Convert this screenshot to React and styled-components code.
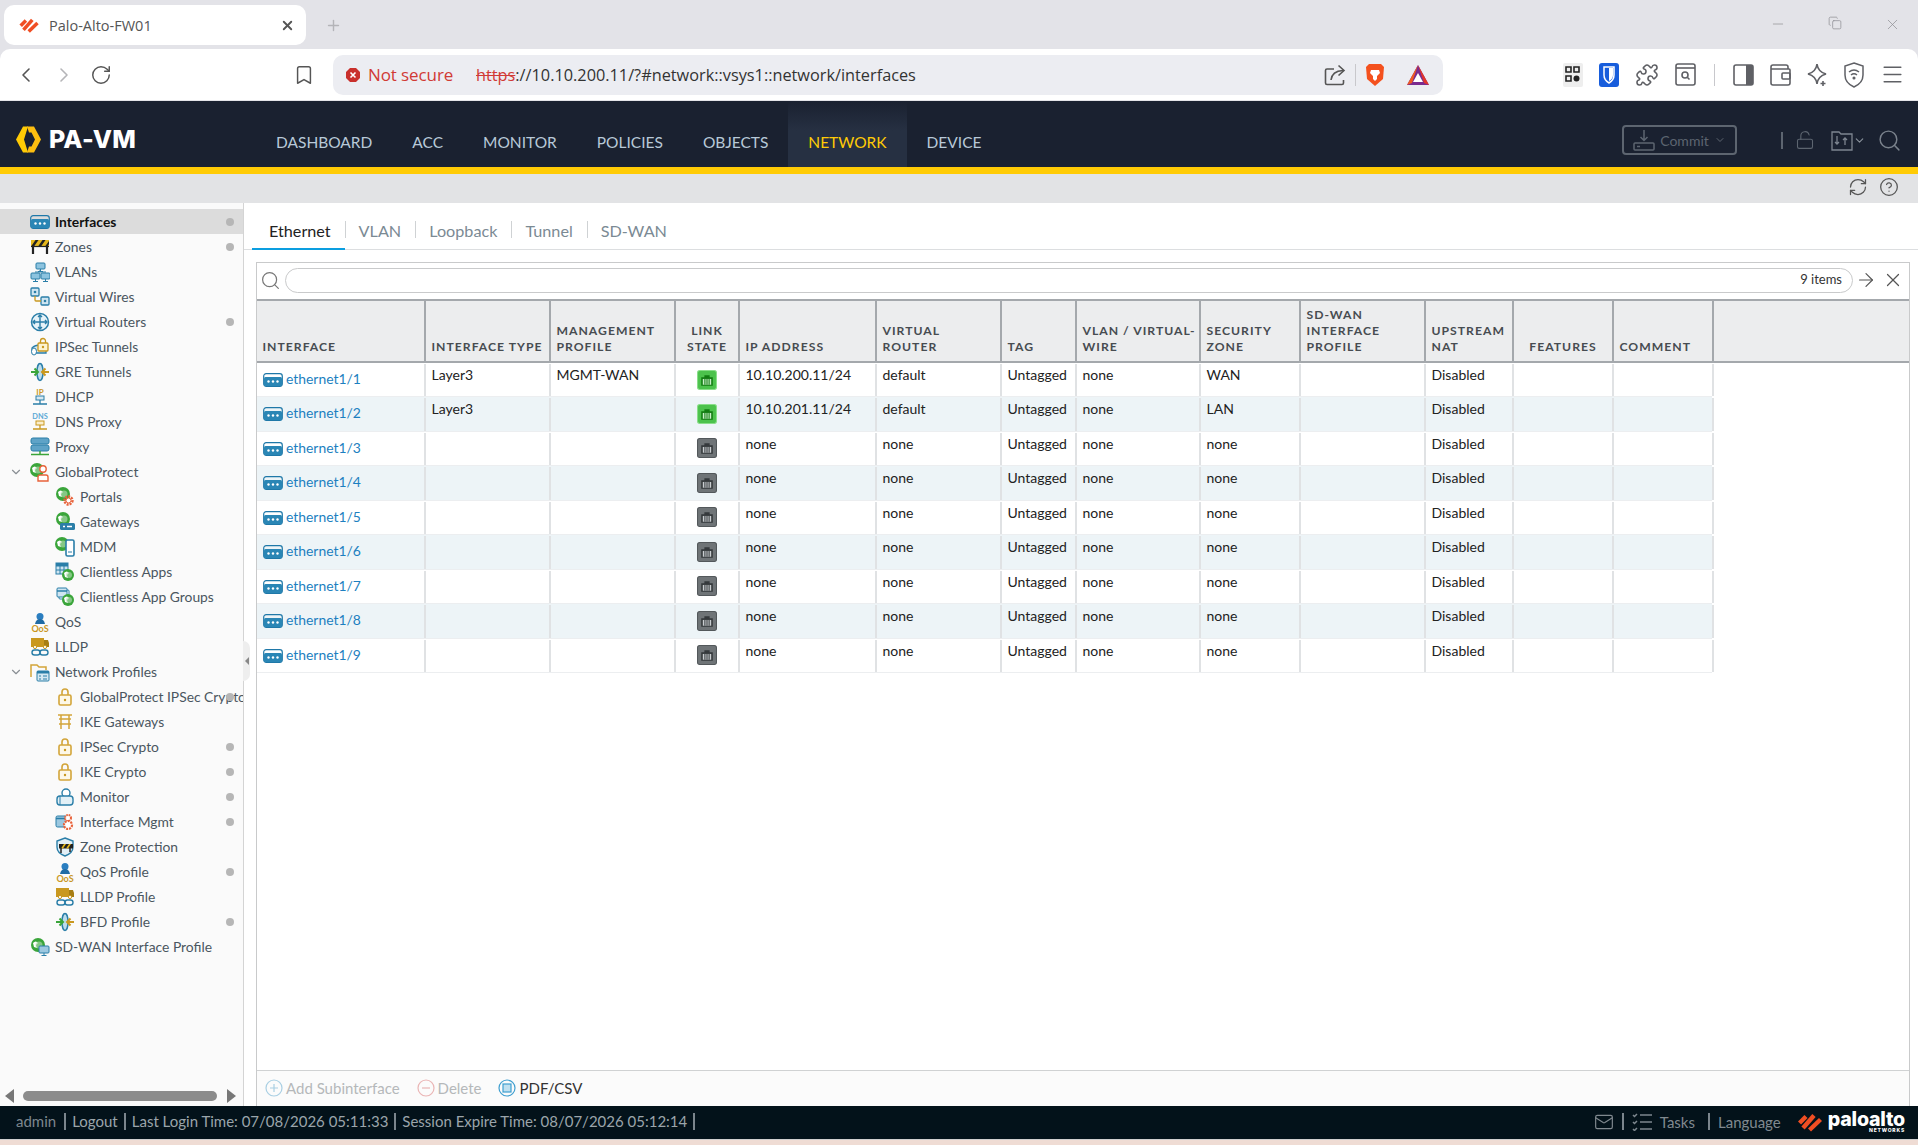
import React from 'react';
import styled, { createGlobalStyle } from 'styled-components';
import { ChevronLeft, ChevronRight, RotateCw, Bookmark, Puzzle, Search, X, Plus, Minus, ChevronDown, ArrowRight, RefreshCw, CircleHelp, Copy, Menu, LockOpen, Mail } from 'lucide-react';

const Global = createGlobalStyle`
  html, body { margin: 0; padding: 0; background: #e3e3e8; }
  body { font-family: "Lato", "Liberation Sans", sans-serif; overflow: hidden; }
  * { box-sizing: border-box; }
`;

const Page = styled.div`display:flex;flex-direction:column;width:1918px;height:1145px;overflow:hidden;`;

/* Browser chrome */
const TabStrip = styled.div`height:49px;background:#e3e3e8;display:flex;align-items:flex-start;padding:5px 0 0 4px;flex:none;`;
const BrowserTab = styled.div`width:302px;height:40px;background:#fff;border-radius:10px;display:flex;align-items:center;padding:0 11px 0 15px;color:#555;font:14.5px "Open Sans",sans-serif;`;
const TabTitle = styled.span`margin-left:9px;flex:1;`;
const NewTab = styled.div`margin:12px 0 0 19px;color:#b4b4b8;display:flex;`;
const WinButtons = styled.div`margin-left:auto;display:flex;gap:42px;padding:11px 17px 0 0;color:#8b8b90;`;
const Toolbar = styled.div`height:52px;background:#fff;border-radius:10px 10px 0 0;display:flex;align-items:center;flex:none;padding:0 0 0 14px;border-bottom:1px solid #e4e4e8;`;
const NavIcons = styled.div`display:flex;align-items:center;gap:14px;width:319px;color:#555;`;
const Dim = styled.span`display:flex;color:#b5b5b8;`;
const BookmarkSlot = styled.span`display:flex;margin-left:auto;margin-right:18px;`;
const Address = styled.div`width:1110px;height:40px;background:#ecedf2;border-radius:10px;display:flex;align-items:center;padding:0 13px 0 12px;font:17px "Open Sans",sans-serif;color:#333;`;
const Insecure = styled.span`color:#d13a35;margin-left:7px;width:108px;letter-spacing:-.1px;`;
const Url = styled.span`font-size:16.3px;`;
const Strike = styled.span`color:#d13a35;text-decoration:line-through;`;
const AddrRight = styled.div`margin-left:auto;display:flex;align-items:center;color:#555;`;
const VSep = styled.span`width:1px;height:22px;background:${p => p.$clear ? 'transparent' : '#c8c8cc'};margin:0 ${p => p.$m || 12}px;`;
const ExtIcons = styled.div`display:flex;align-items:center;gap:16px;margin-left:120px;color:#5f6065;`;

/* App header */
const Header = styled.header`height:73px;flex:none;background:#1a2130;border-bottom:7px solid #ffcb05;display:flex;`;
const Logo = styled.div`width:256px;display:flex;align-items:center;padding:10px 0 0 16px;gap:8px;color:#fff;font:800 25px "Inter",sans-serif;letter-spacing:.2px;`;
const Nav = styled.nav`display:flex;`;
const NavItem = styled.div`padding:15px 20px 0;display:flex;align-items:center;font-size:15.5px;color:${p => p.$active ? '#ffcb05' : '#b8c9d8'};background:${p => p.$active ? 'linear-gradient(#1a2130,#263042 45%)' : 'none'};`;
const HeadRight = styled.div`margin-left:auto;display:flex;align-items:center;color:#5d6570;padding:12px 16px 0 0;`;
const CommitBtn = styled.div`width:115px;height:30px;border:2px solid #5d6570;border-radius:4px;display:flex;align-items:center;justify-content:center;gap:5px;font-size:14px;color:#5d6570;margin-right:44px;`;
const HeadSep = styled.span`width:2px;height:17px;background:#5d6570;margin-right:12px;`;
const HeadGap = styled.span`width:${p => p.$w}px;`;

const SubBar = styled.div`height:29px;flex:none;background:#e2e3e5;display:flex;align-items:center;justify-content:flex-end;gap:11px;padding:0 19px 3px 0;color:#555;`;

const Body = styled.div`height:903px;flex:none;display:flex;background:#fff;`;

/* Sidebar */
const Sidebar = styled.aside`width:244px;flex:none;background:#fafafa;border-right:1px solid #d4d4d4;position:relative;display:flex;flex-direction:column;padding-top:6px;`;
const Tree = styled.div`flex:1;overflow:hidden;`;
const TreeRow = styled.div`height:25px;display:flex;align-items:center;position:relative;padding-left:${p => p.$level ? 55 : 30}px;background:${p => p.$active ? '#dcdcdc' : 'transparent'};font-size:13.85px;font-weight:${p => p.$active ? 700 : 400};color:${p => p.$active ? '#111' : '#4a5660'};white-space:nowrap;overflow:hidden;`;
const Chevron = styled.span`position:absolute;left:9px;top:6px;display:flex;color:#8a8f94;`;
const IconSlot = styled.span`width:22px;height:22px;flex:none;margin-right:4px;display:flex;align-items:center;justify-content:center;margin-left:-1px;`;
const Dot = styled.span`position:absolute;right:9px;top:9px;width:8px;height:8px;border-radius:50%;background:#b6b6b6;`;
const Handle = styled.span`position:absolute;right:-7px;top:438px;width:7px;height:40px;background:#eee;border-radius:0 8px 8px 0;display:flex;align-items:center;justify-content:center;
  &::before{content:"";border:4px solid transparent;border-right:4px solid #888;border-left:none;}`;
const HScroll = styled.div`height:16px;flex:none;margin-bottom:2px;display:flex;align-items:center;padding:0 5px;`;
const ScrollThumb = styled.div`width:194px;height:10px;border-radius:5px;background:#8c8c8c;margin:0 10px 0 9px;`;
const Arrow = styled.span`width:0;height:0;border:7px solid transparent;${p => p.$dir === 'l' ? 'border-right:9px solid #777;border-left:none;' : 'border-left:9px solid #777;border-right:none;'}`;

/* Main */
const Main = styled.main`flex:1;min-width:0;display:flex;flex-direction:column;padding:0 8px 0 12px;`;
const Tabs = styled.div`height:47px;flex:none;margin:0 -8px 12px -12px;padding-left:8px;border-bottom:1px solid #dcdee0;display:flex;align-items:center;`;
const Tab = styled.div`height:47px;display:flex;align-items:center;padding:${p => p.$active ? 9 : 7}px 14px 0 ${p => p.$active ? 17 : 13}px;font-size:16.2px;color:${p => p.$active ? '#222' : '#7b8a94'};position:relative;border-bottom:${p => p.$active ? '2px solid #0c9ee0' : 'none'};margin-bottom:-1px;`;
const TabSep = styled.span`width:1px;height:17px;background:#cfd2d4;margin-top:7px;`;
const Panel = styled.section`flex:1;min-height:0;display:flex;flex-direction:column;border:1px solid #c9cacb;border-bottom:none;`;
const SearchBar = styled.div`height:36px;flex:none;display:flex;align-items:center;padding:0 5px 2px 3px;color:#777;`;
const SearchInput = styled.div`width:1570px;height:25px;margin-left:4px;border:1px solid #c9cacb;border-radius:13px;display:flex;align-items:center;justify-content:flex-end;padding:0 10px 2px 0;font-size:13px;color:#333;`;
const SearchTools = styled.div`display:flex;gap:5px;margin-left:2px;color:#555;`;
const HeaderRow = styled.div`display:flex;height:64px;flex:none;background:#ecedee;border-top:2px solid #a4a8ac;border-bottom:2px solid #a4a8ac;`;
const Th = styled.div`flex:none;width:${p => p.$w}px;border-right:2px solid #a4a8ac;padding:0 5.5px 6px;display:flex;align-items:flex-end;justify-content:${p => p.$center ? 'center' : 'flex-start'};text-align:${p => p.$center ? 'center' : 'left'};font-size:12.2px;font-weight:700;letter-spacing:1px;line-height:16px;color:#474c51;white-space:nowrap;`;
const Rows = styled.div`flex:1;min-height:0;`;
const Row = styled.div`display:flex;height:34.45px;width:1455px;background:${p => p.$alt ? '#edf4f7' : '#fff'};border-bottom:1px solid #eceef0;`;
const Td = styled.div`flex:none;width:${p => p.$w}px;border-right:2px solid #e0e2e4;margin-top:1px;padding:2px 5.5px 0;font-size:14px;line-height:18px;color:#222;white-space:nowrap;`;
const LinkCell = styled(Td)`display:flex;align-items:flex-start;padding:6px 0 0 6px;color:#1c7fc0;gap:3px;font-size:13.9px;`;
const PortWrap = styled.span`display:flex;margin-top:3px;`;
const StateCell = styled(Td)`display:flex;justify-content:center;padding:5.5px 0 0;`;
const Footer = styled.div`height:36px;flex:none;background:#fbfbfb;border-top:1px solid #d0d2d3;display:flex;align-items:center;padding:0 0 2px 8px;font-size:15px;`;
const FootBtn = styled.div`display:flex;align-items:center;gap:3px;margin-right:17px;color:${p => p.$on ? '#333' : '#b5b8ba'};`;

/* Status */
const Status = styled.footer`height:33px;flex:none;background:#03121a;color:#9ba5ab;display:flex;align-items:center;padding:0 13px 2px 16px;font-size:15px;`;
const StatusItem = styled.span`padding:0 6px;border-right:2px solid #7b858c;line-height:17px;&:first-child{padding-left:0;color:#7d878e;padding-right:8px;}`;
const StatusRight = styled.div`margin-left:auto;display:flex;align-items:center;color:#80898f;gap:8px;`;
const Bar = styled.span`width:2px;height:17px;background:#7b858c;margin-left:${p => p.$ml || 0}px;`;
const LangLabel = styled.span`margin-right:9px;`;
const PaloWord = styled.div`display:flex;flex-direction:column;align-items:flex-end;color:#fff;font:800 19.6px/15px "Inter",sans-serif;letter-spacing:-.2px;margin-left:-3px;padding-top:2px;`;
const Networks = styled.span`font-size:5px;line-height:6px;letter-spacing:.8px;`;
const Strip = styled.div`height:6px;flex:none;background:#efdcd4;border-top:1px solid #cfcfcf;`;

/* Icons */
const B = '#2a7ea8', G = '#c9981f', GR = '#3aa53a', O = '#e8623a';
const S = ({ children, w = 20, h = 20, vb = '0 0 20 20' }) => <svg width={w} height={h} viewBox={vb} fill="none">{children}</svg>;

const Port = ({ w = 20, h = 14 }) => <svg width={w} height={h} viewBox="0 0 20 14" fill="none"><rect x=".7" y=".7" width="18.600" height="12.600" rx="2.500" stroke="#1f78a8" strokeWidth="1.2"/><rect x="1" y="4" width="18" height="9" rx="1.500" fill="#2a86b5"/><circle cx="5.500" cy="8.500" r="1.200" fill="#fff"/><circle cx="10" cy="8.500" r="1.200" fill="#fff"/><circle cx="14.500" cy="8.500" r="1.200" fill="#fff"/></svg>;
const Barricade = () => <><rect x="1" y="3" width="18" height="6.500" fill="#e5b71b"/><path d="M1 9.500 5.500 3h3l-4.500 6.500zM8 9.500 12.500 3h3l-4.500 6.500zM15 9.500 19 4v3l-1.500 2.500z" fill="#222"/><path d="M1 9.500h18" stroke="#222" strokeWidth="1.200"/><path d="M3 9v8M17 9v8" stroke="#222" strokeWidth="2.200"/></>;
const Globe = ({ x = 8, y = 8, r = 7 }) => <g><circle cx={x} cy={y} r={r} fill="#3aa53a"/><path d={`M${x - r + 2} ${y - 2}q3-3 5 0l-2 2 1 3-3-1z`} fill="#fff"/><circle cx={x + 1} cy={y} r={r * .5} fill="#b8e0b8" opacity=".6"/></g>;
const Monitor = ({ x, y }) => <g><rect x={x} y={y} width="9" height="6" rx="1" fill="#8cc3df" stroke={B}/><path d={`M${x + 4.5} ${y + 6}v2M${x + 2} ${y + 8.5}h5`} stroke={B}/></g>;
const LockIco = () => <><rect x="4" y="8" width="12" height="10" rx="1.5" stroke="#d3a53a" strokeWidth="1.6" fill="#fdf8e8"/><path d="M7 8V5a3 3 0 016 0v3" stroke="#d3a53a" strokeWidth="1.6"/><circle cx="10" cy="13" r="1.2" fill={G}/></>;
const QosIco = () => <><circle cx="10" cy="4.500" r="3.500" fill="#2a7ec0"/><path d="M5 12q1-5 5-5t5 5z" fill="#1f6ba5"/><text x="10" y="19.500" textAnchor="middle" fontSize="9" fontWeight="700" fill={G} fontFamily="Lato">QoS</text></>;
const TruckIco = () => <><rect x="1" y="1" width="13" height="9" fill={G}/><path d="M14 3h4l1 3v4h-5z" fill="#a77e14"/><circle cx="5" cy="10" r="1.6" fill="#fff" stroke={G}/><circle cx="15" cy="10" r="1.6" fill="#fff" stroke={G}/><rect x="2" y="13" width="8" height="5" rx="2.5" stroke={B} strokeWidth="1.4"/><rect x="10" y="13" width="8" height="5" rx="2.5" stroke={B} strokeWidth="1.4"/></>;
const Tunnel = () => <><ellipse cx="10" cy="10" rx="3" ry="8.500" fill="#bcdcec" stroke={B} strokeWidth="1.4"/><path d="M1 10h6M4.500 6.500 8 10l-3.500 3.500" stroke={GR} strokeWidth="2"/><path d="M19 10h-6M15.500 6.500 12 10l3.500 3.500" stroke={G} strokeWidth="2"/></>;

const icons = {
  iface: <Port />,
  zones: <S><Barricade /></S>,
  vlans: <S><Monitor x={6} y={1} /><Monitor x={1} y={11} /><Monitor x={11} y={11} /><path d="M10 8v2M5 10h11" stroke={B} /></S>,
  wires: <S><rect x="1" y="1" width="8" height="8" rx="1" fill="#cfe5f1" stroke={B} strokeWidth="1.3" /><rect x="11" y="10" width="8" height="8" rx="1" fill="#cfe5f1" stroke={B} strokeWidth="1.3" /><circle cx="5" cy="5" r="1.3" fill={B} /><circle cx="15" cy="14" r="1.3" fill={B} /><path d="M5 9v4q0 1 1 1h5" stroke={G} strokeWidth="1.3" /></S>,
  router: <S><circle cx="10" cy="10" r="8.500" fill="#e6f2f8" stroke={B} strokeWidth="1.5" /><path d="M10 3v14M3 10h14M8 5l2-2 2 2M8 15l2 2 2-2M5 8l-2 2 2 2M15 8l2 2-2 2" stroke={B} strokeWidth="1.4" /></S>,
  ipsec: <S><path d="M2 11q3-3 8-3h6v8H5a3 3 0 01-3-3z" fill="#d5e8f2" stroke={B} strokeWidth="1.3" /><ellipse cx="4" cy="14.500" rx="2.500" ry="3.500" fill="#fff" stroke={B} /><rect x="8" y="6" width="10" height="8" rx="1" fill="#fdf3d0" stroke={G} strokeWidth="1.3" /><path d="M10.500 6V4a2.500 2.500 0 015 0v2" stroke={G} strokeWidth="1.3" /><circle cx="13" cy="10" r="1.2" fill={G} /></S>,
  gre: <S><Tunnel /></S>,
  dhcp: <S><text x="10" y="7.500" textAnchor="middle" fontSize="8" fontWeight="700" fill={G} fontFamily="Lato">IP</text><rect x="6" y="9" width="8" height="4" fill="#d6e8f2" stroke={B} /><path d="M10 13v4M3 17h14" stroke={B} strokeWidth="1.3" /></S>,
  dns: <S><text x="10" y="7" textAnchor="middle" fontSize="7.400" fontWeight="700" fill="#5aa9d6" fontFamily="Lato">DNS</text><rect x="6" y="9" width="8" height="4" fill="#fbeecb" stroke={G} /><path d="M10 13v4M3 17h14" stroke={G} strokeWidth="1.3" /></S>,
  proxy: <S><rect x="1" y="1" width="18" height="6" rx="2" fill="#5fa3c7" stroke={B} /><rect x="1" y="8" width="18" height="6" rx="2" fill="#5fa3c7" stroke={B} /><path d="M10 14v3M1 17.500h18" stroke={GR} strokeWidth="1.5" /></S>,
  gp: <S><Globe x={7} y={8} /><circle cx="13" cy="7" r="3.200" fill="#fff" stroke={O} strokeWidth="1.4" /><path d="M8 19v-4q0-2 2-2h6q2 0 2 2v4z" fill="#fff" stroke={O} strokeWidth="1.4" /></S>,
  portal: <S><Globe x={8} y={7} /><circle cx="13.500" cy="13.500" r="4" fill="none" stroke={O} strokeWidth="2.400" strokeDasharray="2 1" /><circle cx="13.500" cy="13.500" r="2.500" fill="#fff" stroke={O} /></S>,
  gateway: <S><Globe x={8} y={7} /><rect x="5" y="11" width="15" height="7" rx="1.5" fill={B} /><path d="M8 14.500h2M12 14.500h5" stroke="#fff" strokeWidth="1.4" /></S>,
  mdm: <S><Globe x={7} y={7} /><rect x="11" y="3" width="8" height="16" rx="1.5" fill="#fff" stroke={B} strokeWidth="1.6" /><path d="M13 15h4" stroke={B} /></S>,
  apps: <S><rect x="1" y="1" width="12" height="11" fill="#cfe5f1" stroke={B} /><path d="M1 4h12M1 8h12M5 4v8M9 4v8" stroke={B} /><rect x="1" y="1" width="12" height="3" fill={B} /><Globe x={13} y={13} r={6} /></S>,
  appgrp: <S><rect x="4" y="3" width="10" height="9" rx="1" fill="#fff" stroke={B} /><rect x="2" y="1" width="10" height="9" rx="1" fill="#cfe5f1" stroke={B} /><path d="M2 4h10" stroke={B} strokeWidth="1.5" /><Globe x={13} y={13} r={6} /></S>,
  qos: <S><QosIco /></S>,
  lldp: <S><TruckIco /></S>,
  netprof: <S><path d="M1 15V3h6l2 2h7v3" stroke="#d3a53a" strokeWidth="1.5" /><rect x="7" y="9" width="12" height="10" rx="1" fill="#d5e8f2" stroke={B} /><rect x="7" y="9" width="12" height="2.500" fill={B} /><path d="M9 14h2M13 14h4M9 17h2M13 17h4" stroke={B} /></S>,
  lock: <S><LockIco /></S>,
  torii: <S><path d="M3 3h14M4 7h12M6 3v14M14 3v14M4 12h12" stroke="#d3a53a" strokeWidth="1.5" /></S>,
  mon: <S><circle cx="11" cy="6" r="4" fill="#fff" stroke={B} strokeWidth="1.4" /><rect x="2" y="9" width="16" height="9" rx="3" fill="#e3f0f6" stroke={B} strokeWidth="1.4" /><path d="M5 9v9" stroke={B} /></S>,
  mgmt: <S><rect x="1" y="4" width="13" height="11" rx="1.5" fill="#9cc8e0" stroke={B} /><path d="M1 6.500h13" stroke={B} strokeWidth="1.5" /><circle cx="13" cy="6" r="3" stroke={O} strokeWidth="2" strokeDasharray="1.6 .8" fill="#fff" /><circle cx="13" cy="13" r="4" stroke={O} strokeWidth="2.200" strokeDasharray="2 1" fill="#fff" /></S>,
  zprot: <S><path d="M10 1l8 3v6q0 6-8 9-8-3-8-9V4z" fill="#e2eff6" stroke={B} strokeWidth="1.4" /><path d="M4 7h14v4.500H4z" fill="#222" /><path d="M6 11.500 9 7h2l-3 4.500zM11 11.500 14 7h2l-3 4.500z" fill="#e5b71b" /><path d="M6 11v5M15 11v4" stroke="#222" strokeWidth="1.5" /></S>,
  sdwan: <S><Globe x={8} y={8} /><rect x="9" y="9" width="10" height="7" rx="1" fill="#9cc8e0" stroke={B} /><path d="M14 16v2M11.500 18.500h5" stroke={B} /></S>,
};

const tree = [
  ['Interfaces', 'iface', { active: 1, dot: 1 }], ['Zones', 'zones', { dot: 1 }], ['VLANs', 'vlans'], ['Virtual Wires', 'wires'], ['Virtual Routers', 'router', { dot: 1 }],
  ['IPSec Tunnels', 'ipsec'], ['GRE Tunnels', 'gre'], ['DHCP', 'dhcp'], ['DNS Proxy', 'dns'], ['Proxy', 'proxy'], ['GlobalProtect', 'gp', { open: 1 }],
  ['Portals', 'portal', { level: 1 }], ['Gateways', 'gateway', { level: 1 }], ['MDM', 'mdm', { level: 1 }], ['Clientless Apps', 'apps', { level: 1 }], ['Clientless App Groups', 'appgrp', { level: 1 }],
  ['QoS', 'qos'], ['LLDP', 'lldp'], ['Network Profiles', 'netprof', { open: 1 }],
  ['GlobalProtect IPSec Crypto', 'lock', { level: 1, dot: 1 }], ['IKE Gateways', 'torii', { level: 1 }], ['IPSec Crypto', 'lock', { level: 1, dot: 1 }], ['IKE Crypto', 'lock', { level: 1, dot: 1 }],
  ['Monitor', 'mon', { level: 1, dot: 1 }], ['Interface Mgmt', 'mgmt', { level: 1, dot: 1 }], ['Zone Protection', 'zprot', { level: 1 }], ['QoS Profile', 'qos', { level: 1, dot: 1 }], ['LLDP Profile', 'lldp', { level: 1 }], ['BFD Profile', 'gre', { level: 1, dot: 1 }], ['SD-WAN Interface Profile', 'sdwan'],
];

const cols = [169, 125, 125, 64, 137, 125, 75, 124, 100, 125, 88, 100, 100];
const heads = ['INTERFACE', 'INTERFACE TYPE', <>MANAGEMENT<br />PROFILE</>, <>LINK<br />STATE</>, 'IP ADDRESS', <>VIRTUAL<br />ROUTER</>, 'TAG', <>VLAN / VIRTUAL-<br />WIRE</>, <>SECURITY<br />ZONE</>, <>SD-WAN<br />INTERFACE<br />PROFILE</>, <>UPSTREAM<br />NAT</>, 'FEATURES', 'COMMENT'];
const data = Array.from({ length: 9 }, (_, i) => ({
  name: `ethernet1/${i + 1}`,
  type: i < 2 ? 'Layer3' : '',
  mgmt: i === 0 ? 'MGMT-WAN' : '',
  up: i < 2,
  ip: i === 0 ? '10.10.200.11/24' : i === 1 ? '10.10.201.11/24' : 'none',
  vr: i < 2 ? 'default' : 'none',
  zone: i === 0 ? 'WAN' : i === 1 ? 'LAN' : 'none',
}));

const LinkState = ({ up }) => {
  const bg = up ? '#4cc24c' : '#6f7477', bd = up ? '#8ade8a' : '#53585b', ink = up ? '#127c12' : '#35393c', hole = up ? '#c9f0c9' : '#c9cdd0';
  return <svg width="20" height="20" viewBox="0 0 19 19"><rect x=".5" y=".5" width="18" height="18" rx="2" fill={bg} stroke={bd} /><path d="M4 7h3V5h5v2h3v8H4z" fill={ink} /><path d="M5.500 8.500h8V14h-8z" fill={hole} /><path d="M7.500 8.500V14M9.500 8.500V14M11.500 8.500V14" stroke={ink} /></svg>;
};

const PaloMark = ({ w = 25, h = 20 }) => <svg width={w} height={h} viewBox="0 0 25 20" fill="none" stroke="#f04e23" strokeWidth="4.400"><path d="M1.500 11 8 4.500" /><path d="M5 16 16 3.500" /><path d="M11.500 18 22.500 7.500" /></svg>;
const PALogo = () => <svg width="25" height="27" viewBox="0 0 25 26"><path d="M7 0h5L8 13l4 13H7L0 13z" fill="#ffcb05" /><path d="M11 0h7l7 13-7 13h-7l2-6h2.500l3.500-7-3.500-7H13z" fill="#fdbe10" /></svg>;

const ShareIco = () => <svg width="22" height="22" viewBox="0 0 22 22" fill="none" stroke="#555" strokeWidth="1.6"><path d="M10 5H3a1.500 1.500 0 00-1.500 1.500V19A1.500 1.500 0 003 20.500h15a1.500 1.500 0 001.500-1.500v-3" /><path d="M7 16q1-9 12-9.500" /><path d="M14.500 1.500 20 6.500l-5.500 5" /></svg>;
const Brave = () => <svg width="20" height="24" viewBox="0 0 20 24"><path d="M4 1h12l3 3-1 12-8 7-8-7L1 4z" fill="#f4511e" /><path d="M6 7h8l1 3-3 3v3l-2 2-2-2v-3L5 10z" fill="#fff" /></svg>;
const Bat = () => <svg width="24" height="22" viewBox="0 0 24 22"><path d="M12 1L1 21h22z" fill="#7b2b8f" /><path d="M12 1L1 21l5-2z" fill="#f15a22" /><path d="M12 1l11 20-5-2z" fill="#e2352b" /><path d="M12 9l-5 9h10z" fill="#fff" /></svg>;
const Bitwarden = () => <svg width="20" height="24" viewBox="0 0 20 24"><rect width="20" height="24" rx="3" fill="#175ddc" /><path d="M5 4h10v8q0 5-5 8-5-3-5-8z" stroke="#fff" strokeWidth="1.5" fill="none" /><path d="M10 5h4v7q0 4-4 6z" fill="#fff" /></svg>;
const Qr = () => <svg width="20" height="24" viewBox="0 0 20 24"><rect width="20" height="24" rx="2" fill="#eee" /><path d="M3 4h5v5H3zM11 4h5v5h-5zM3 13h5v5H3z" fill="none" stroke="#222" strokeWidth="1.6" /><circle cx="13.500" cy="15.500" r="3" fill="#222" /></svg>;
const WinSearch = () => <svg width="21" height="23" viewBox="0 0 21 23" fill="none" stroke="#5f6065" strokeWidth="1.6"><rect x="1" y="1" width="19" height="21" rx="2" /><path d="M1 5h19" /><circle cx="10" cy="12" r="3" /><path d="M12.500 14.500l2 2" /></svg>;
const Panelico = () => <svg width="21" height="22" viewBox="0 0 21 22"><rect x="1" y="1" width="19" height="20" rx="2" fill="#fff" stroke="#5f6065" strokeWidth="1.6" /><rect x="13" y="1" width="7" height="20" fill="#5f6065" /></svg>;
const Wallet = () => <svg width="21" height="22" viewBox="0 0 21 22" fill="none" stroke="#5f6065" strokeWidth="1.6"><path d="M18 5V3a2 2 0 00-2-2H3a2 2 0 00-2 2v16a2 2 0 002 2h15a2 2 0 002-2V6a1 1 0 00-1-1H1" /><rect x="12" y="9" width="8" height="6" rx="1" /></svg>;
const Spark = () => <svg width="21" height="24" viewBox="0 0 21 24" fill="none" stroke="#5f6065" strokeWidth="1.6"><path d="M10 1q1 8 9 10-8 2-9 10-1-8-9-10 8-2 9-10z" /><path d="M16 18v5M13.500 20.500h5" /></svg>;
const ShieldWifi = () => <svg width="20" height="26" viewBox="0 0 20 26" fill="none" stroke="#5f6065" strokeWidth="1.5"><path d="M10 1l9 3v9q0 8-9 12-9-4-9-12V4z" /><path d="M5 10q5-4 10 0M7 13q3-2.500 6 0" /><circle cx="10" cy="16" r=".8" /></svg>;
const FileTransfer = () => <svg width="22" height="22" viewBox="0 0 22 22" fill="none" stroke="#7d8590" strokeWidth="1.3"><path d="M1 3h7l2 2h11v16H1z" /><path d="M6 7v8M4 13l2 2 2-2M14 16V9M12 11l2-2 2 2" /></svg>;
const Download = () => <svg width="22" height="22" viewBox="0 0 22 22" fill="none" stroke="#5d6570" strokeWidth="1.5"><path d="M11 1v10M7.500 8l3.500 3.500L14.500 8" /><rect x="1" y="14" width="20" height="7" rx="1" /><path d="M4 17.500h3" /></svg>;
const CircleBtn = ({ c, children }) => <svg width="18" height="18" viewBox="0 0 18 18" fill="none" stroke={c} strokeWidth="1.2"><circle cx="9" cy="9" r="8" />{children}</svg>;
const Tasks = () => <svg width="20" height="18" viewBox="0 0 20 18" fill="none" stroke="#7d878e" strokeWidth="1.5"><path d="M8 2h12M8 9h12M8 16h12M1 2l1.500 1.500L5 1M1 9l1.500 1.500L5 8M1 16l1.500 1.500L5 15" /></svg>;

export default function App() {
  return (
    <Page>
      <Global />
      <TabStrip>
        <BrowserTab><PaloMark w={21} h={16} /><TabTitle>Palo-Alto-FW01</TabTitle><X size={15} strokeWidth={3} color="#555" /></BrowserTab>
        <NewTab><Plus size={17} /></NewTab>
        <WinButtons><Minus size={16} strokeWidth={1} /><Copy size={14} strokeWidth={1.2} /><X size={17} strokeWidth={1} /></WinButtons>
      </TabStrip>
      <Toolbar>
        <NavIcons>
          <ChevronLeft size={24} strokeWidth={1.6} />
          <Dim><ChevronRight size={24} strokeWidth={1.6} /></Dim>
          <RotateCw size={22} strokeWidth={1.6} />
          <BookmarkSlot><Bookmark size={22} strokeWidth={1.6} /></BookmarkSlot>
        </NavIcons>
        <Address>
          <svg width="16" height="16" viewBox="0 0 16 16"><path d="M5 1h6l4 4v6l-4 4H5l-4-4V5z" fill="#c9302c" /><path d="M5.500 5.500l5 5M10.500 5.500l-5 5" stroke="#fff" strokeWidth="1.6" /></svg>
          <Insecure>Not secure</Insecure>
          <Url><Strike>https</Strike>://10.10.200.11/?#network::vsys1::network/interfaces</Url>
          <AddrRight>
            <ShareIco />
            <VSep $m={9} />
            <Brave />
            <VSep $m={10} $clear />
            <Bat />
          </AddrRight>
        </Address>
        <ExtIcons>
          <Qr /><Bitwarden /><Puzzle size={24} strokeWidth={1.6} /><WinSearch />
          <VSep $m={2} />
          <Panelico /><Wallet /><Spark /><ShieldWifi /><Menu size={25} strokeWidth={1.4} />
        </ExtIcons>
      </Toolbar>
      <Header>
        <Logo><PALogo />PA-VM</Logo>
        <Nav>
          {['DASHBOARD', 'ACC', 'MONITOR', 'POLICIES', 'OBJECTS', 'NETWORK', 'DEVICE'].map(n => <NavItem key={n} $active={n === 'NETWORK'}>{n}</NavItem>)}
        </Nav>
        <HeadRight>
          <CommitBtn><Download />Commit<ChevronDown size={12} /></CommitBtn>
          <HeadSep />
          <LockOpen size={20} strokeWidth={1.3} />
          <HeadGap $w={16} />
          <FileTransfer /><ChevronDown size={13} color="#8a929c" />
          <HeadGap $w={11} />
          <Search size={25} strokeWidth={1.4} color="#7a828c" />
        </HeadRight>
      </Header>
      <SubBar><RefreshCw size={20} strokeWidth={1.5} /><CircleHelp size={20} strokeWidth={1.5} /></SubBar>
      <Body>
        <Sidebar>
          <Tree>
            {tree.map(([label, ic, o = {}]) => (
              <TreeRow key={label} $level={o.level} $active={o.active}>
                {o.open && <Chevron><ChevronDown size={14} /></Chevron>}
                <IconSlot>{icons[ic]}</IconSlot>
                {label}
                {o.dot && <Dot />}
              </TreeRow>
            ))}
          </Tree>
          <Handle />
          <HScroll><Arrow $dir="l" /><ScrollThumb /><Arrow $dir="r" /></HScroll>
        </Sidebar>
        <Main>
          <Tabs>
            <Tab $active>Ethernet</Tab><TabSep />
            <Tab>VLAN</Tab><TabSep />
            <Tab>Loopback</Tab><TabSep />
            <Tab>Tunnel</Tab><TabSep />
            <Tab>SD-WAN</Tab>
          </Tabs>
          <Panel>
            <SearchBar>
              <Search size={21} strokeWidth={1.4} />
              <SearchInput>9 items</SearchInput>
              <SearchTools><ArrowRight size={22} strokeWidth={1.3} /><X size={22} strokeWidth={1.3} /></SearchTools>
            </SearchBar>
            <HeaderRow>
              {heads.map((h, i) => <Th key={i} $w={cols[i]} $center={i === 3 || i === 11}><span>{h}</span></Th>)}
            </HeaderRow>
            <Rows>
              {data.map((d, i) => (
                <Row key={d.name} $alt={i % 2 === 1}>
                  <LinkCell $w={cols[0]}><PortWrap><Port /></PortWrap>{d.name}</LinkCell>
                  <Td $w={cols[1]}>{d.type}</Td>
                  <Td $w={cols[2]}>{d.mgmt}</Td>
                  <StateCell $w={cols[3]}><LinkState up={d.up} /></StateCell>
                  <Td $w={cols[4]}>{d.ip}</Td>
                  <Td $w={cols[5]}>{d.vr}</Td>
                  <Td $w={cols[6]}>Untagged</Td>
                  <Td $w={cols[7]}>none</Td>
                  <Td $w={cols[8]}>{d.zone}</Td>
                  <Td $w={cols[9]} />
                  <Td $w={cols[10]}>Disabled</Td>
                  <Td $w={cols[11]} />
                  <Td $w={cols[12]} />
                </Row>
              ))}
            </Rows>
            <Footer>
              <FootBtn><CircleBtn c="#a9cfe3"><path d="M9 5v8M5 9h8" /></CircleBtn>Add Subinterface</FootBtn>
              <FootBtn><CircleBtn c="#eab5b5"><path d="M5 9h8" /></CircleBtn>Delete</FootBtn>
              <FootBtn $on><CircleBtn c="#3f9fd0"><rect x="5" y="5" width="8" height="8" fill="#bfe0f0" /></CircleBtn>PDF/CSV</FootBtn>
            </Footer>
          </Panel>
        </Main>
      </Body>
      <Status>
        <StatusItem>admin</StatusItem>
        <StatusItem>Logout</StatusItem>
        <StatusItem>Last Login Time: 07/08/2026 05:11:33</StatusItem>
        <StatusItem>Session Expire Time: 08/07/2026 05:12:14</StatusItem>
        <StatusRight>
          <Mail size={20} strokeWidth={1.4} />
          <Bar />
          <Tasks />
          <span>Tasks</span>
          <Bar $ml={5} />
          <LangLabel>Language</LangLabel>
          <PaloMark />
          <PaloWord>paloalto<Networks>NETWORKS</Networks></PaloWord>
        </StatusRight>
      </Status>
      <Strip />
    </Page>
  );
}
